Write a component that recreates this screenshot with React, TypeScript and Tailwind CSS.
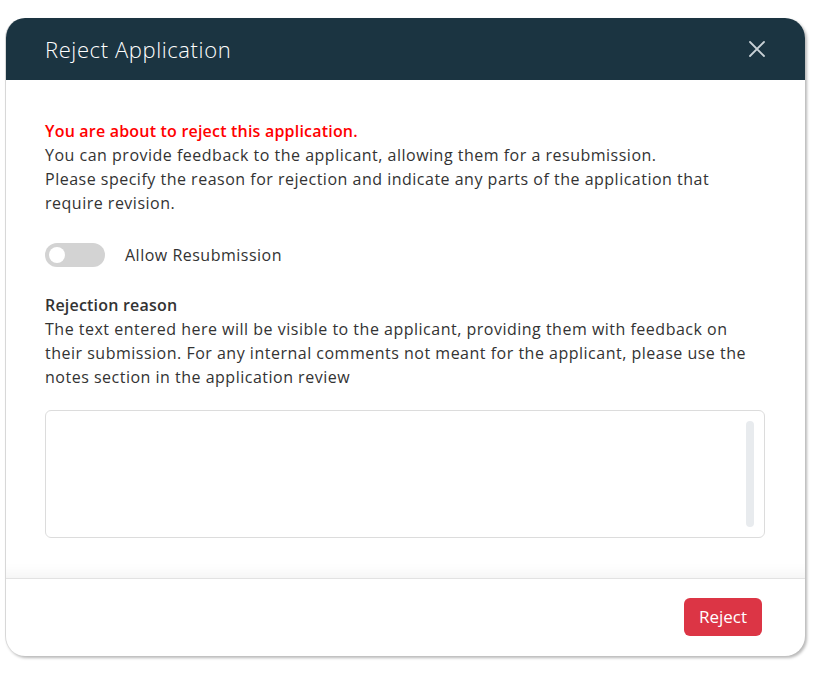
import { useState } from "react"

export default function App() {
  const [allow, setAllow] = useState(false)
  const [reason, setReason] = useState("")

  return (
    <div className="min-h-[680px] bg-white pt-[18px] pl-[5px]" style={{ fontFamily: '"Open Sans", "Liberation Sans", sans-serif' }}>
      <div className="w-[800px] h-[638px] flex flex-col rounded-[20px] bg-white border-l border-[#d8d8d8] shadow-[2px_2px_3px_rgba(0,0,0,0.28)] overflow-hidden">
        {/* header */}
        <div className="h-[62px] shrink-0 bg-[#1b3441] flex items-center justify-between pl-[39px] pr-[39px]">
          <h2 className="text-[22px] text-white font-light tracking-[0.6px]">Reject Application</h2>
          <button className="text-[#c9d1d6]" aria-label="Close">
            <svg width="18" height="18" viewBox="0 0 18 18" fill="none" stroke="currentColor" strokeWidth="1.8" strokeLinecap="round">
              <path d="M2 2L16 16M16 2L2 16" />
            </svg>
          </button>
        </div>

        {/* body */}
        <div className="flex-1 pl-[39px] pr-[40px] pt-[39px] text-[16px] leading-[24px] tracking-[0.5px] text-[#333] shadow-[inset_0_-18px_14px_-14px_rgba(0,0,0,0.05)]">
          <p className="text-[#ff0000] font-semibold tracking-[0.2px]">You are about to reject this application.</p>
          <p>You can provide feedback to the applicant, allowing them for a resubmission.</p>
          <p>Please specify the reason for rejection and indicate any parts of the application that require revision.</p>

          <label className="mt-[28px] flex items-center gap-[20px] cursor-pointer">
            <button
              type="button"
              onClick={() => setAllow(!allow)}
              className={`w-[60px] h-[24px] rounded-full flex items-center px-[4px] ${allow ? "bg-[#1b3441] justify-end" : "bg-[#d3d3d3] justify-start"}`}
            >
              <span className="w-[16px] h-[16px] rounded-full bg-white" />
            </button>
            <span>Allow Resubmission</span>
          </label>

          <div className="mt-[26px]">
            <p className="font-semibold tracking-[0.2px]">Rejection reason</p>
            <p>
              The text entered here will be visible to the applicant, providing them with feedback on their submission. For any internal comments not meant for the applicant, please use the notes section in the application review
            </p>
          </div>

          <div className="mt-[21px] h-[128px] rounded-[6px] border border-[#dcdcdc] flex p-[10px]">
            <textarea
              value={reason}
              onChange={(e) => setReason(e.target.value)}
              className="flex-1 resize-none outline-none text-[16px]"
            />
            <div className="w-[8px] rounded-full bg-[#e8ebee]" />
          </div>
        </div>

        {/* footer */}
        <div className="h-[78px] shrink-0 border-t border-[#e2e2e2] flex items-center justify-end pr-[43px] pb-[2px]">
          <button className="h-[38px] px-[15px] rounded-[6px] bg-[#dc3545] text-white text-[17px]">Reject</button>
        </div>
      </div>
    </div>
  )
}
